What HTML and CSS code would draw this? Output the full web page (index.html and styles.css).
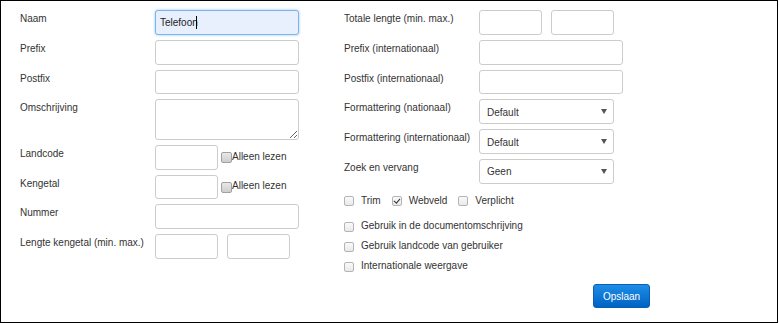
FILE: index.html
```html
<!DOCTYPE html>
<html lang="nl">
<head>
<meta charset="utf-8">
<title>Veld</title>
<link rel="stylesheet" href="styles.css">
</head>
<body>
<div class="panel">
  <div class="col">
    <div class="row">
      <label class="lbl">Naam</label>
      <div class="ctl caretwrap">
        <input class="inp w-full focus" type="text" value="Telefoon">
        <span class="caret"></span>
      </div>
    </div>
    <div class="row">
      <label class="lbl">Prefix</label>
      <div class="ctl"><input class="inp w-full" type="text"></div>
    </div>
    <div class="row">
      <label class="lbl">Postfix</label>
      <div class="ctl"><input class="inp w-full" type="text"></div>
    </div>
    <div class="row">
      <label class="lbl">Omschrijving</label>
      <div class="ctl"><textarea class="inp w-full area"></textarea></div>
    </div>
    <div class="row">
      <label class="lbl">Landcode</label>
      <div class="ctl inline">
        <input class="inp w-short" type="text">
        <label class="ro"><input class="cb-grey" type="checkbox">Alleen lezen</label>
      </div>
    </div>
    <div class="row">
      <label class="lbl">Kengetal</label>
      <div class="ctl inline">
        <input class="inp w-short" type="text">
        <label class="ro"><input class="cb-grey" type="checkbox">Alleen lezen</label>
      </div>
    </div>
    <div class="row">
      <label class="lbl">Nummer</label>
      <div class="ctl"><input class="inp w-full" type="text"></div>
    </div>
    <div class="row">
      <label class="lbl">Lengte kengetal (min. max.)</label>
      <div class="ctl pair">
        <input class="inp w-short" type="text">
        <input class="inp w-short" type="text">
      </div>
    </div>
  </div>

  <div class="col">
    <div class="row">
      <label class="lbl">Totale lengte (min. max.)</label>
      <div class="ctl pair">
        <input class="inp w-short" type="text">
        <input class="inp w-short" type="text">
      </div>
    </div>
    <div class="row">
      <label class="lbl">Prefix (internationaal)</label>
      <div class="ctl"><input class="inp w-full" type="text"></div>
    </div>
    <div class="row">
      <label class="lbl">Postfix (internationaal)</label>
      <div class="ctl"><input class="inp w-full" type="text"></div>
    </div>
    <div class="row">
      <label class="lbl">Formattering (nationaal)</label>
      <div class="ctl selwrap">
        <select class="inp w-sel sel"><option>Default</option></select>
        <span class="arrow"></span>
      </div>
    </div>
    <div class="row">
      <label class="lbl">Formattering (internationaal)</label>
      <div class="ctl selwrap">
        <select class="inp w-sel sel"><option>Default</option></select>
        <span class="arrow"></span>
      </div>
    </div>
    <div class="row">
      <label class="lbl">Zoek en vervang</label>
      <div class="ctl selwrap">
        <select class="inp w-sel sel"><option>Geen</option></select>
        <span class="arrow"></span>
      </div>
    </div>

    <div class="checks">
      <div class="checkline first">
        <label class="chk"><input class="cb" type="checkbox">Trim</label>
        <label class="chk"><input class="cb" type="checkbox" checked>Webveld</label>
        <label class="chk"><input class="cb" type="checkbox">Verplicht</label>
      </div>
      <div class="checkline">
        <label class="chk"><input class="cb" type="checkbox">Gebruik in de documentomschrijving</label>
      </div>
      <div class="checkline">
        <label class="chk"><input class="cb" type="checkbox">Gebruik landcode van gebruiker</label>
      </div>
      <div class="checkline">
        <label class="chk"><input class="cb" type="checkbox">Internationale weergave</label>
      </div>
    </div>

    <div class="actions">
      <button class="btn" type="button">Opslaan</button>
    </div>
  </div>
</div>
</body>
</html>
```

FILE: styles.css
```css
* {
  box-sizing: border-box;
}

body {
  margin: 0;
  font-family: "Liberation Sans", Arial, sans-serif;
  font-size: 10px;
  color: #333;
  background: #fff;
}

.panel {
  width: 778px;
  height: 323px;
  border: 1px solid #000;
  display: flex;
  padding: 9px 0 0 19px;
}

.col {
  width: 324px;
  display: flex;
  flex-direction: column;
  gap: 5px;
}

.row {
  display: flex;
  align-items: flex-start;
}

.lbl {
  width: 135px;
  flex: none;
  padding-top: 3px;
  line-height: 11.5px;
}

.ctl {
  display: flex;
  align-items: center;
}

.inp {
  display: block;
  height: 24.8px;
  margin: 0;
  border: 1px solid #ccc;
  border-radius: 3px;
  padding: 0 4px;
  font: inherit;
  color: #333;
  background: #fff;
  outline: none;
}

.w-full { width: 144px; }
.w-short { width: 63px; }
.w-sel { width: 135px; }

.area {
  height: 40.5px;
  resize: both;
}

.focus {
  border-color: #7db3ea;
  background: #e8f0fe;
  box-shadow: 0 0 3px rgba(102, 175, 233, 0.7);
  color: #222;
  padding-left: 4px;
}

.caretwrap {
  position: relative;
}

.caret {
  position: absolute;
  left: 41px;
  top: 6px;
  width: 1px;
  height: 13px;
  background: #000;
}

.pair {
  gap: 9px;
}

.ro {
  display: flex;
  align-items: center;
  margin-left: 3px;
  padding-top: 0;
  line-height: 11.5px;
  margin-top: -2px;
}

.cb-grey {
  appearance: none;
  -webkit-appearance: none;
  width: 11px;
  height: 11px;
  margin: 2px 0 0 0;
  border: 1px solid #a0a0a0;
  border-radius: 2px;
  background: linear-gradient(#e8e8e8, #cdcdcd);
  flex: none;
}

.selwrap {
  position: relative;
}

.sel {
  appearance: none;
  -webkit-appearance: none;
  padding-left: 7px;
  padding-top: 1px;
}

.arrow {
  position: absolute;
  right: 7px;
  top: 10px;
  width: 0;
  height: 0;
  border-left: 3px solid transparent;
  border-right: 3px solid transparent;
  border-top: 5px solid #555;
  pointer-events: none;
}

.checks {
  display: flex;
  flex-direction: column;
  gap: 8px;
  margin-top: 6px;
}

.checkline {
  display: flex;
  gap: 11px;
  line-height: 12px;
}

.checkline.first {
  margin-bottom: 5.5px;
}

.chk {
  display: flex;
  align-items: center;
  gap: 7px;
}

.cb {
  appearance: none;
  -webkit-appearance: none;
  position: relative;
  width: 10px;
  height: 10px;
  margin: 1px 0 0 0;
  border: 1px solid #b4b4b4;
  border-radius: 2px;
  background: linear-gradient(#fafafa, #e9e9e9);
  flex: none;
}

.cb:checked::after {
  content: "";
  position: absolute;
  left: 2.5px;
  top: 0;
  width: 2.5px;
  height: 5px;
  border-right: 1.6px solid #333;
  border-bottom: 1.6px solid #333;
  transform: rotate(40deg);
}

.actions {
  margin-top: 6.5px;
  padding-left: 249px;
}

.btn {
  width: 57px;
  height: 24.5px;
  margin: 0;
  padding: 0;
  border: 1px solid #0b5eb4;
  border-radius: 3px;
  background: linear-gradient(#1e8de6, #0062c4);
  color: #fff;
  font: inherit;
  font-size: 10px;
}
```
